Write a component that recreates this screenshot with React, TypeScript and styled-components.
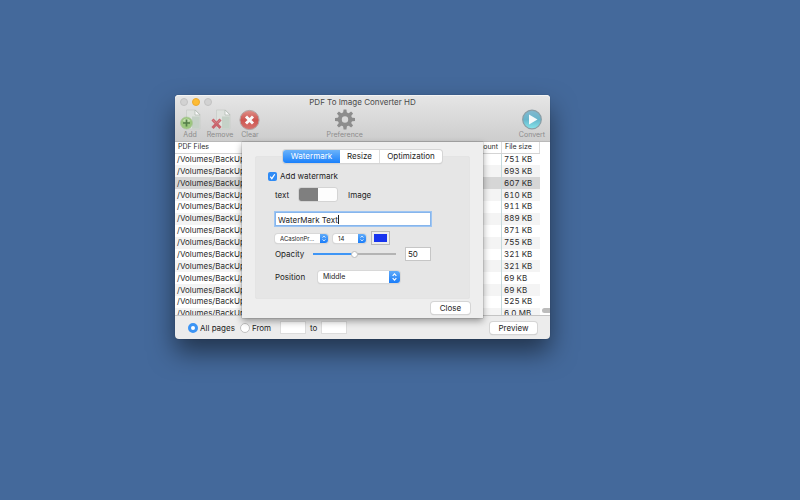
import React, { useState } from "react";
import styled, { createGlobalStyle } from "styled-components";

const GlobalStyle = createGlobalStyle`
  *, *::before, *::after { box-sizing: border-box; }
  html { background: #44699b; }
  body { margin: 0; }
  body, button, input, select {
    font-family: Inter, "Liberation Sans", sans-serif;
    font-size: 8px;
    line-height: 12px;
    color: #1c1c1c;
  }
  button, input, select { margin: 0; padding: 0; border: 0; outline: 0; }
`;

const Desktop = styled.main`
  display: grid;
  grid-template-columns: 7fr 15fr 10fr;
  min-height: 100vh;
  padding-top: 95px;
  align-items: start;
  background: #44699b;
`;

const Window = styled.section`
  grid-column: 2;
  position: relative;
  display: flex;
  flex-direction: column;
  border-radius: 4px;
  background: #ececec;
  box-shadow: 0 0 1px rgba(0, 0, 0, 0.4), 0 13px 26px rgba(0, 0, 0, 0.5);
`;

const Chrome = styled.header`
  padding-bottom: 2px;
  border-radius: 4px 4px 0 0;
  border-bottom: 1px solid #b9b9b9;
  background: linear-gradient(#e6e6e6, #cdcdcd);
  box-shadow: inset 0 1px 0 #f4f4f4;
`;

const TitleBar = styled.div`
  display: grid;
  grid-template-columns: 1fr auto 1fr;
  align-items: center;
  height: 13px;
  padding: 0 5px;
`;

const Lights = styled.div`
  display: flex;
  gap: 4px;
`;

const Light = styled.button<{ $amber?: boolean }>`
  width: 8px;
  height: 8px;
  border-radius: 50%;
  border: 1px solid ${(p) => (p.$amber ? "#eda92c" : "#c2c2c2")};
  background: ${(p) => (p.$amber ? "#fdbc35" : "#d2d2d2")};
`;

const Title = styled.h1`
  margin: 0;
  font-size: 8px;
  font-weight: 400;
  color: #4a4a4a;
`;

const Toolbar = styled.div`
  display: flex;
  padding-right: 3px;
`;

const Spacer = styled.span<{ $grow: number }>`
  flex: ${(p) => p.$grow} 0 0;
`;

const Tool = styled.button<{ $wide?: boolean }>`
  display: flex;
  flex-direction: column;
  align-items: center;
  width: ${(p) => (p.$wide ? 36 : 30)}px;
  background: none;
  font-size: 7px;
  line-height: 8px;
  color: #8c8c8c;

  svg { display: block; width: 24px; height: 23px; }
`;

const TableArea = styled.div`
  display: flex;
  height: 174px;
  overflow: hidden;
  background: #fff;
  border-bottom: 1px solid #c4c4c4;
`;

const FileTable = styled.table`
  flex: 1;
  height: 178px;
  border-collapse: collapse;
  table-layout: fixed;
`;

const HeadCell = styled.th<{ $width?: number; $right?: boolean }>`
  width: ${(p) => (p.$width ? `${p.$width}px` : "auto")};
  height: 11px;
  padding: 0 3px;
  border-right: 1px solid #dcdcdc;
  border-bottom: 1px solid #d4d4d4;
  font-size: 7px;
  font-weight: 400;
  line-height: 10px;
  color: #2c2c2c;
  text-align: ${(p) => (p.$right ? "right" : "left")};
`;

const Row = styled.tr<{ $selected?: boolean }>`
  background: ${(p) => (p.$selected ? "#d6d6d6" : "#fff")};
  &:nth-child(even) { background: #f4f4f4; }
`;

const Cell = styled.td<{ $ruled?: boolean }>`
  padding: 0 2px;
  border-right: ${(p) => (p.$ruled ? "1px solid #c5dadd" : "0")};
  line-height: 11px;
  font-variant-numeric: tabular-nums;
  white-space: nowrap;
  overflow: hidden;
  color: #2b2b2b;
`;

const Scroller = styled.div`
  display: flex;
  flex-direction: column;
  justify-content: flex-end;
  align-items: flex-end;
  width: 10px;
  padding-bottom: 2px;
`;

const Knob = styled.span`
  width: 8px;
  height: 5px;
  border-radius: 3px 0 0 3px;
  background: #bcbcbc;
`;

const Footer = styled.footer`
  display: flex;
  align-items: center;
  height: 23px;
  padding: 0 13px;
  gap: 4px;
`;

const RadioLabel = styled.label`
  display: flex;
  align-items: center;
  gap: 2px;
  padding-right: 1px;
  white-space: nowrap;
`;

const Radio = styled.input.attrs({ type: "radio" })`
  appearance: none;
  width: 10px;
  height: 10px;
  border-radius: 50%;
  border: 1px solid #c0c0c0;
  background: #fff;
  &:checked {
    border: 3px solid #3c94f4;
  }
`;

const NumberField = styled.input<{ $sheet?: boolean }>`
  width: 26px;
  height: ${(p) => (p.$sheet ? 14 : 13)}px;
  padding: 0 2px;
  background: #fff;
  border: 1px solid ${(p) => (p.$sheet ? "#c6c6c6" : "#dcdcdc")};
`;

const PushButton = styled.button<{ $wide?: boolean }>`
  width: ${(p) => (p.$wide ? 47 : 39)}px;
  height: 12px;
  margin-left: auto;
  border-radius: 3px;
  background: #fff;
  box-shadow: 0 0 0 1px #d5d5d5, 0 1px 1px #b5b5b5;
`;

const Sheet = styled.section`
  position: absolute;
  top: 47px;
  left: 0;
  right: 0;
  width: 241px;
  margin: 0 auto;
  display: flex;
  flex-direction: column;
  padding: 8px 13px 4px;
  background: #eeeeee;
  box-shadow: 0 0 1px rgba(0, 0, 0, 0.5), 0 3px 7px rgba(0, 0, 0, 0.38);
`;

const Tabs = styled.div`
  position: relative;
  display: flex;
  align-self: center;
  border-radius: 3px;
  background: #fff;
  box-shadow: 0 0 0 1px #d5d5d5, 0 1px 1px #b5b5b5;
`;

const Tab = styled.button<{ $active: boolean; $width: number }>`
  width: ${(p) => p.$width}px;
  height: 13px;
  line-height: 13px;
  background: ${(p) => (p.$active ? "linear-gradient(#6bb3fa, #1a80fb)" : "transparent")};
  color: ${(p) => (p.$active ? "#fff" : "#1c1c1c")};
  &:first-child { border-radius: 3px 0 0 3px; }
  &:last-child { border-left: 1px solid #dedede; }
`;

const Pane = styled.div`
  display: flex;
  flex-direction: column;
  margin: -7px 0 3px;
  padding: 13px 38px 7px 12px;
  border: 1px solid #e4e4e4;
  background: #e6e6e6;
  border-radius: 2px;
`;

const Line = styled.div<{ $height: number; $gap?: number }>`
  display: flex;
  align-items: center;
  height: ${(p) => p.$height}px;
  padding-left: 7px;
  gap: ${(p) => p.$gap ?? 0}px;
`;

const CheckLabel = styled.label`
  display: flex;
  align-items: center;
  gap: 3px;
  height: 12px;
`;

const Check = styled.input.attrs({ type: "checkbox" })`
  appearance: none;
  width: 9px;
  height: 9px;
  border-radius: 2px;
  background: #fff;
  &:checked {
    background: #2f8bf5 url("data:image/svg+xml,%3Csvg xmlns='http://www.w3.org/2000/svg' viewBox='0 0 8 8'%3E%3Cpath d='M2 4.2 3.4 5.9 6 2' fill='none' stroke='white' stroke-width='1.1'/%3E%3C/svg%3E");
  }
`;

const Caption = styled.label<{ $width?: number }>`
  width: ${(p) => (p.$width ? `${p.$width}px` : "auto")};
  white-space: nowrap;
`;

const Switch = styled.input.attrs({ type: "checkbox", role: "switch" })`
  appearance: none;
  display: flex;
  width: 40px;
  height: 15px;
  border: 1px solid #d4d4d4;
  border-radius: 3px;
  background: #fdfdfd;
  &::before {
    content: "";
    width: 50%;
    border-radius: 2px 0 0 2px;
    background: #7f7f7f;
  }
  &:checked { justify-content: flex-end; }
`;

const TextField = styled.input`
  width: 100%;
  height: 14px;
  padding: 1px 2px 0;
  border: 1px solid #86b5ec;
  background: #fff;
  box-shadow: 0 0 0 1px #9ec5f2;
`;

/* The caret stands after a hidden copy of the typed text. */
const FieldBox = styled.div`
  position: relative;
  flex: 1;
  display: flex;
`;

const Caret = styled.span`
  position: absolute;
  top: 3px;
  left: 3px;
  border-right: 1px solid #222;
  color: transparent;
  line-height: 9px;
  pointer-events: none;
  &::before { content: attr(data-value); }
`;

const SelectBox = styled.div<{ $width: number; $small?: boolean }>`
  display: grid;
  grid-template-columns: 1fr auto;
  width: ${(p) => p.$width}px;
  height: ${(p) => (p.$small ? 9 : 12)}px;
  border-radius: 3px;
  background: #fff;
  box-shadow: 0 0 0 1px #d8d8d8, 0 1px 1px #bdbdbd;

  select {
    grid-area: 1 / 1 / 2 / 3;
    appearance: none;
    min-width: 0;
    height: 100%;
    padding: 0 ${(p) => (p.$small ? 8 : 11)}px 0 5px;
    background: transparent;
    font-size: ${(p) => (p.$small ? 6 : 7)}px;
    line-height: ${(p) => (p.$small ? 9 : 12)}px;
  }
  svg {
    grid-area: 1 / 2 / 2 / 3;
    width: ${(p) => (p.$small ? 8 : 11)}px;
    height: 100%;
    border-radius: 0 3px 3px 0;
    background: linear-gradient(#5faaf8, #1a7dfa);
    pointer-events: none;
  }
`;

const ColorWell = styled.button`
  width: 19px;
  height: 14px;
  border: 1px solid #b9b9b9;
  background: #1733ee;
  box-shadow: inset 0 0 0 2px #ececec;
`;

const Slider = styled.input.attrs({ type: "range" })`
  appearance: none;
  width: 83px;
  height: 8px;
  background: linear-gradient(90deg, #3e95f5 50%, #b4b4b4 50%) center / 100% 2px no-repeat;
  &::-webkit-slider-thumb {
    appearance: none;
    width: 7px;
    height: 7px;
    border-radius: 50%;
    border: 1px solid #bcbcbc;
    background: #fff;
  }
`;

const Actions = styled.div`
  display: flex;
`;

const Page = () => (
  <>
    <path d="M8.500 2h9l4.500 4.500V21H8.500z" fill="#dde1dd" stroke="#c6cac6" strokeWidth=".7" />
    <path d="M14 8.500h7.500V20.500h-7.500z" fill="#bccbbf" opacity=".75" />
    <path d="M17 2v5h5z" fill="#f8f8f8" stroke="#b4bdb5" strokeWidth=".8" />
  </>
);

const AddIcon = () => (
  <svg viewBox="0 0 24 23" aria-hidden="true">
    <Page />
    <circle cx="8.500" cy="15" r="6" fill="#9bc67d" stroke="#a9c49a" strokeWidth=".7" />
    <path d="M4.500 13a4.500 4.500 0 0 1 8 0q-4 2-8 0z" fill="#d2e7bf" opacity=".7" />
    <path d="M8.500 11.500v7M5 15h7" stroke="#557f4a" strokeWidth="1.700" />
  </svg>
);

const RemoveIcon = () => (
  <svg viewBox="0 0 24 23" aria-hidden="true">
    <Page />
    <path d="m4.500 11.500 8 8.500M12.500 11.500l-8 8.500" stroke="#c9656d" strokeWidth="3" />
    <path d="m4.500 11.500 3.500 3.700M12.500 11.500 9 15.200" stroke="#d98388" strokeWidth="1" />
  </svg>
);

const ClearIcon = () => (
  <svg viewBox="0 0 24 23" aria-hidden="true">
    <defs>
      <linearGradient id="clearFill" x2="0" y2="1">
        <stop stopColor="#df9089" />
        <stop offset=".5" stopColor="#cd5550" />
        <stop offset="1" stopColor="#d77570" />
      </linearGradient>
    </defs>
    <circle cx="11.500" cy="12" r="9.600" fill="url(#clearFill)" stroke="#b3a5a4" strokeWidth="1" />
    <path d="m8 8.500 7 7M15 8.500l-7 7" stroke="#fafafa" strokeWidth="3" />
  </svg>
);

const GearIcon = () => (
  <svg viewBox="0 0 24 23" aria-hidden="true">
    <g fill="#8d8d8d">
      {[0, 45, 90, 135, 180, 225, 270, 315].map((angle) => (
        <path key={angle} d="M9.900 6 10.600 1.500h2.800L14.100 6z" transform={`rotate(${angle} 12 11.500)`} />
      ))}
    </g>
    <circle cx="12" cy="11.500" r="5.200" fill="none" stroke="#8d8d8d" strokeWidth="4" />
  </svg>
);

const ConvertIcon = () => (
  <svg viewBox="0 0 24 23" aria-hidden="true">
    <defs>
      <linearGradient id="convertFill" x2="0" y2="1">
        <stop stopColor="#83b9cf" />
        <stop offset=".5" stopColor="#67b5cb" />
        <stop offset="1" stopColor="#86e6ec" />
      </linearGradient>
    </defs>
    <circle cx="12" cy="11.500" r="9.300" fill="url(#convertFill)" stroke="#8a9da5" strokeWidth="1.200" />
    <path d="m9 6.500 8.500 5L9 16.500z" fill="#f5f9fa" />
  </svg>
);

const Arrows = () => (
  <svg viewBox="0 0 11 13" aria-hidden="true">
    <path d="m3.500 5.200 2-2.200 2 2.200M3.500 7.800l2 2.200 2-2.200" fill="none" stroke="#fff" strokeWidth="1.200" />
  </svg>
);

const sizes = [
  "751 KB", "693 KB", "607 KB", "610 KB", "911 KB", "889 KB", "871 KB",
  "755 KB", "321 KB", "321 KB", "69 KB", "69 KB", "525 KB", "6.0 MB",
];

const tabs = [
  { name: "Watermark", width: 57 },
  { name: "Resize", width: 39 },
  { name: "Optimization", width: 63 },
];

export default function App() {
  const [tab, setTab] = useState("Watermark");
  const [text, setText] = useState("WaterMark Text");

  return (
    <>
      <GlobalStyle />
      <Desktop>
        <Window>
          <Chrome>
            <TitleBar>
              <Lights>
                <Light aria-label="Close window" />
                <Light $amber aria-label="Minimize window" />
                <Light aria-label="Zoom window" />
              </Lights>
              <Title>PDF To Image Converter HD</Title>
            </TitleBar>
            <Toolbar>
              <Tool><AddIcon />Add</Tool>
              <Tool><RemoveIcon />Remove</Tool>
              <Tool><ClearIcon />Clear</Tool>
              <Spacer $grow={2} />
              <Tool $wide><GearIcon />Preference</Tool>
              <Spacer $grow={5} />
              <Tool><ConvertIcon />Convert</Tool>
            </Toolbar>
          </Chrome>

          <TableArea>
            <FileTable>
              <thead>
                <tr>
                  <HeadCell>PDF Files</HeadCell>
                  <HeadCell $width={60} $right>Page count</HeadCell>
                  <HeadCell $width={38}>File size</HeadCell>
                </tr>
              </thead>
              <tbody>
                {sizes.map((size, i) => (
                  <Row key={i} $selected={i === 2}>
                    <Cell>/Volumes/BackUp</Cell>
                    <Cell $ruled />
                    <Cell>{size}</Cell>
                  </Row>
                ))}
              </tbody>
            </FileTable>
            <Scroller><Knob /></Scroller>
          </TableArea>

          <Footer>
            <RadioLabel><Radio name="pages" defaultChecked />All pages</RadioLabel>
            <RadioLabel><Radio name="pages" />From</RadioLabel>
            <Spacer $grow={0} />
            <NumberField aria-label="From page" />
            <Caption htmlFor="to-page">to</Caption>
            <NumberField id="to-page" />
            <PushButton $wide>Preview</PushButton>
          </Footer>

          <Sheet role="dialog" aria-label="Preference">
            <Tabs role="tablist">
              {tabs.map(({ name, width }) => (
                <Tab
                  key={name}
                  role="tab"
                  aria-selected={tab === name}
                  $active={tab === name}
                  $width={width}
                  onClick={() => setTab(name)}
                >
                  {name}
                </Tab>
              ))}
            </Tabs>
            <Pane>
              <CheckLabel><Check defaultChecked />Add watermark</CheckLabel>
              <Line $height={25}>
                <Caption htmlFor="kind" $width={23}>text</Caption>
                <Switch id="kind" />
                <Spacer $grow={1} />
                <Caption htmlFor="kind" $width={83}>Image</Caption>
              </Line>
              <Line $height={24}>
                <FieldBox>
                  <TextField
                    aria-label="Watermark text"
                    value={text}
                    onChange={(e) => setText(e.target.value)}
                  />
                  <Caret data-value={text} />
                </FieldBox>
              </Line>
              <Line $height={14} $gap={5}>
                <SelectBox $width={53} $small>
                  <select aria-label="Font"><option>ACaslonPr...</option></select>
                  <Arrows />
                </SelectBox>
                <SelectBox $width={33} $small>
                  <select aria-label="Font size"><option>14</option></select>
                  <Arrows />
                </SelectBox>
                <ColorWell aria-label="Text colour" />
              </Line>
              <Line $height={18}>
                <Caption htmlFor="opacity" $width={38}>Opacity</Caption>
                <Slider id="opacity" min={0} max={100} defaultValue={50} />
                <Spacer $grow={1} />
                <NumberField $sheet aria-label="Opacity value" defaultValue="50" />
              </Line>
              <Line $height={28}>
                <Caption htmlFor="position" $width={43}>Position</Caption>
                <SelectBox $width={82}>
                  <select id="position"><option>Middle</option></select>
                  <Arrows />
                </SelectBox>
              </Line>
            </Pane>
            <Actions>
              <PushButton>Close</PushButton>
            </Actions>
          </Sheet>
        </Window>
      </Desktop>
    </>
  );
}
